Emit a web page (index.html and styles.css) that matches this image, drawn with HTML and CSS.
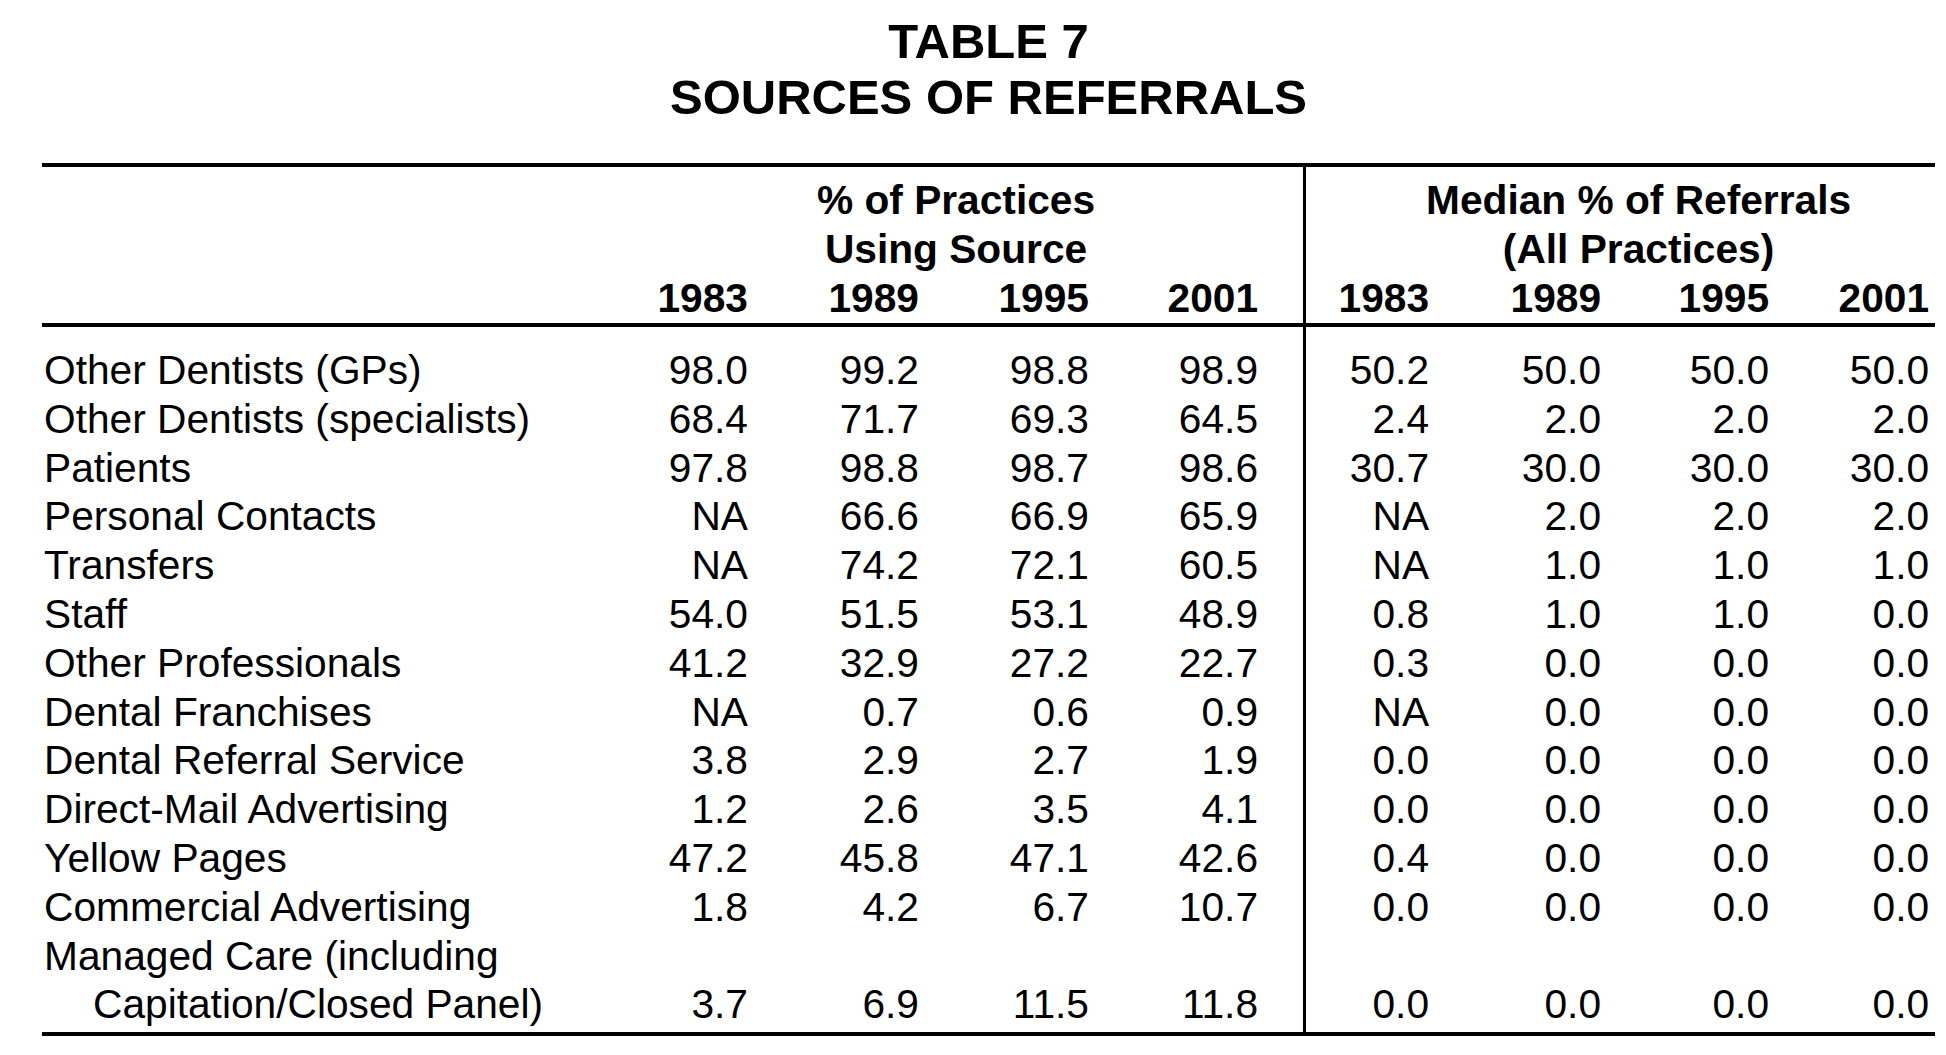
FILE: index.html
```html
<!DOCTYPE html>
<html lang="en">
<head>
<meta charset="utf-8">
<title>Table 7 - Sources of Referrals</title>
<link rel="stylesheet" href="styles.css">
</head>
<body>
<div class="sheet">
  <h1 class="title">TABLE 7<br>SOURCES OF REFERRALS</h1>
  <table class="data">
    <colgroup>
      <col class="w-label">
      <col class="w-a1"><col class="w-a2"><col class="w-a3"><col class="w-a4">
      <col class="w-b1"><col class="w-b2"><col class="w-b3"><col class="w-b4">
    </colgroup>
    <thead>
      <tr class="group-row">
        <th class="label"></th>
        <th class="group group-a" colspan="4">% of Practices<br>Using Source</th>
        <th class="group group-b divider" colspan="4">Median % of Referrals<br>(All Practices)</th>
      </tr>
      <tr class="year-row">
        <th class="label"></th>
        <th class="num">1983</th><th class="num">1989</th><th class="num">1995</th><th class="num end-a">2001</th>
        <th class="num divider">1983</th><th class="num">1989</th><th class="num">1995</th><th class="num end-b">2001</th>
      </tr>
    </thead>
    <tbody>
      <tr><td class="label">Other Dentists (GPs)</td><td class="num">98.0</td><td class="num">99.2</td><td class="num">98.8</td><td class="num end-a">98.9</td><td class="num divider">50.2</td><td class="num">50.0</td><td class="num">50.0</td><td class="num end-b">50.0</td></tr>
      <tr><td class="label">Other Dentists (specialists)</td><td class="num">68.4</td><td class="num">71.7</td><td class="num">69.3</td><td class="num end-a">64.5</td><td class="num divider">2.4</td><td class="num">2.0</td><td class="num">2.0</td><td class="num end-b">2.0</td></tr>
      <tr><td class="label">Patients</td><td class="num">97.8</td><td class="num">98.8</td><td class="num">98.7</td><td class="num end-a">98.6</td><td class="num divider">30.7</td><td class="num">30.0</td><td class="num">30.0</td><td class="num end-b">30.0</td></tr>
      <tr><td class="label">Personal Contacts</td><td class="num">NA</td><td class="num">66.6</td><td class="num">66.9</td><td class="num end-a">65.9</td><td class="num divider">NA</td><td class="num">2.0</td><td class="num">2.0</td><td class="num end-b">2.0</td></tr>
      <tr><td class="label">Transfers</td><td class="num">NA</td><td class="num">74.2</td><td class="num">72.1</td><td class="num end-a">60.5</td><td class="num divider">NA</td><td class="num">1.0</td><td class="num">1.0</td><td class="num end-b">1.0</td></tr>
      <tr><td class="label">Staff</td><td class="num">54.0</td><td class="num">51.5</td><td class="num">53.1</td><td class="num end-a">48.9</td><td class="num divider">0.8</td><td class="num">1.0</td><td class="num">1.0</td><td class="num end-b">0.0</td></tr>
      <tr><td class="label">Other Professionals</td><td class="num">41.2</td><td class="num">32.9</td><td class="num">27.2</td><td class="num end-a">22.7</td><td class="num divider">0.3</td><td class="num">0.0</td><td class="num">0.0</td><td class="num end-b">0.0</td></tr>
      <tr><td class="label">Dental Franchises</td><td class="num">NA</td><td class="num">0.7</td><td class="num">0.6</td><td class="num end-a">0.9</td><td class="num divider">NA</td><td class="num">0.0</td><td class="num">0.0</td><td class="num end-b">0.0</td></tr>
      <tr><td class="label">Dental Referral Service</td><td class="num">3.8</td><td class="num">2.9</td><td class="num">2.7</td><td class="num end-a">1.9</td><td class="num divider">0.0</td><td class="num">0.0</td><td class="num">0.0</td><td class="num end-b">0.0</td></tr>
      <tr><td class="label">Direct-Mail Advertising</td><td class="num">1.2</td><td class="num">2.6</td><td class="num">3.5</td><td class="num end-a">4.1</td><td class="num divider">0.0</td><td class="num">0.0</td><td class="num">0.0</td><td class="num end-b">0.0</td></tr>
      <tr><td class="label">Yellow Pages</td><td class="num">47.2</td><td class="num">45.8</td><td class="num">47.1</td><td class="num end-a">42.6</td><td class="num divider">0.4</td><td class="num">0.0</td><td class="num">0.0</td><td class="num end-b">0.0</td></tr>
      <tr><td class="label">Commercial Advertising</td><td class="num">1.8</td><td class="num">4.2</td><td class="num">6.7</td><td class="num end-a">10.7</td><td class="num divider">0.0</td><td class="num">0.0</td><td class="num">0.0</td><td class="num end-b">0.0</td></tr>
      <tr class="last"><td class="label">Managed Care (including<span class="sub">Capitation/Closed Panel)</span></td><td class="num">3.7</td><td class="num">6.9</td><td class="num">11.5</td><td class="num end-a">11.8</td><td class="num divider">0.0</td><td class="num">0.0</td><td class="num">0.0</td><td class="num end-b">0.0</td></tr>
    </tbody>
  </table>
</div>
</body>
</html>
```

FILE: styles.css
```css
html, body {
  margin: 0;
  padding: 0;
  background: #ffffff;
}

body {
  color: #000000;
  font-family: "Liberation Sans", Arial, sans-serif;
}

.sheet {
  width: 1893px;
  padding-left: 42px;
}

.title {
  margin: 0 0 38px 0;
  padding-top: 13px;
  font-size: 49px;
  line-height: 56px;
  font-weight: 700;
  text-align: center;
}

.data {
  width: 1893px;
  table-layout: fixed;
  border-collapse: separate;
  border-spacing: 0;
  border-top: 4px solid #000;
  border-bottom: 4px solid #000;
  font-size: 40.7px;
}

.w-label { width: 535px; }
.w-a1 { width: 171px; }
.w-a2 { width: 171px; }
.w-a3 { width: 170px; }
.w-a4 { width: 214px; }
.w-b1 { width: 126px; }
.w-b2 { width: 172px; }
.w-b3 { width: 168px; }
.w-b4 { width: 166px; }

.data th,
.data td {
  padding: 0;
  vertical-align: bottom;
}

.data thead th {
  font-weight: 700;
  line-height: 49px;
}

.data .group-row th {
  padding-top: 9px;
  text-align: center;
}

.data .group-a {
  padding-left: 78px;
  padding-right: 46px;
}

.data .group-b {
  padding-left: 36px;
}

.data .year-row th {
  border-bottom: 4px solid #000;
}

.data tbody td {
  font-weight: 400;
  line-height: 48.8px;
}

.data tbody tr:first-child td {
  padding-top: 19px;
}

.data tbody tr.last td {
  padding-bottom: 3px;
}

.data .label {
  text-align: left;
  padding-left: 2px;
}

.data .num {
  text-align: right;
}

.data .end-a {
  padding-right: 45px;
}

.data .end-b {
  padding-right: 6px;
}

.data .divider {
  border-left: 3px solid #000;
}

.sub {
  display: block;
  padding-left: 49px;
}
```
